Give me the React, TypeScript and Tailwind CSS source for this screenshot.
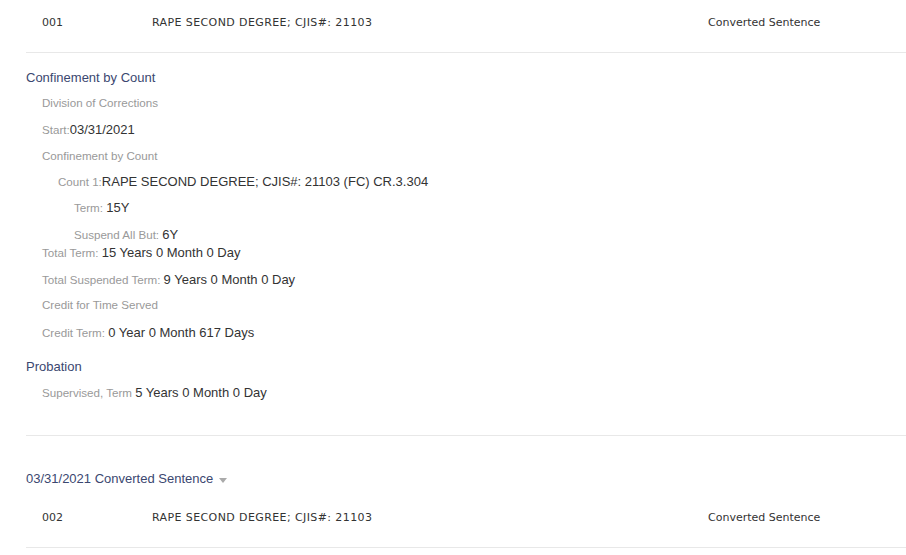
import React from 'react';

const HEAD = 'text-[13px] text-[#3b4770]';
const LABEL = 'text-[11.6px] text-[#999999]';
const VALUE = 'text-[13px] text-[#333333]';

const Line: React.FC<{ indent?: string; label: string; value?: string; h?: string }> = ({ indent = 'pl-4', label, value, h = 'h-[26px] leading-[26px]' }) => (
  <div className={`${indent} ${h} whitespace-nowrap`}>
    <span className={LABEL}>{label}</span>
    {value && <span className={VALUE}>{value}</span>}
  </div>
);

const ChargeRow: React.FC<{ no: string; h: string }> = ({ no, h }) => (
  <div className={`${h} flex items-center text-[11px] text-[#333333] font-['DejaVu_Sans',Verdana,sans-serif]`}>
    <span className="w-[126px] pl-4">{no}</span>
    <span className="w-[556px] tracking-[0.4px]">RAPE SECOND DEGREE; CJIS#: 21103</span>
    <span>Converted Sentence</span>
  </div>
);

export default function App() {
  return (
    <div className="w-[906px] h-[555px] overflow-hidden bg-white pl-[26px] font-['Liberation_Sans',Arial,sans-serif]">
      <ChargeRow no="001" h="h-[52px] pb-[6px]" />
      <div className="h-px bg-[#e8e8e8]" />

      <div className={`${HEAD} mt-[12px] h-[26px] leading-[26px]`}>Confinement by Count</div>
      <div className="-mt-[2px]">
        <Line label="Division of Corrections" />
        <Line label="Start:" value="03/31/2021" h="h-[27px] leading-[27px]" />
        <Line label="Confinement by Count" />
        <Line indent="pl-8" label="Count 1:" value="RAPE SECOND DEGREE; CJIS#: 21103 (FC) CR.3.304" />
        <Line indent="pl-12" label="Term: " value="15Y" />
        <Line indent="pl-12" label="Suspend All But: " value="6Y" h="h-[22px] leading-[27px]" />
        <Line label="Total Term: " value="15 Years 0 Month 0 Day" h="h-[24px] leading-[20px]" />
        <Line label="Total Suspended Term: " value="9 Years 0 Month 0 Day" />
        <Line label="Credit for Time Served" h="h-[26px] leading-[24px]" />
        <Line label="Credit Term: " value="0 Year 0 Month 617 Days" h="h-[27px] leading-[27px]" />
      </div>

      <div className={`${HEAD} mt-[9px] h-[26px] leading-[26px]`}>Probation</div>
      <div className="-mt-[1px]">
        <Line label="Supervised, Term " value="5 Years 0 Month 0 Day" />
      </div>

      <div className="mt-[30px] h-px bg-[#e8e8e8]" />

      <div className={`${HEAD} mt-[30px] h-[26px] leading-[26px] flex items-center gap-[6px]`}>
        <span>03/31/2021 Converted Sentence</span>
        <svg width="8" height="5" viewBox="0 0 8 5" className="mt-[2px]">
          <path d="M0 0 L8 0 L4 5 Z" fill="#aaaaaa" />
        </svg>
      </div>
      <ChargeRow no="002" h="h-[55px] pb-[3px]" />
      <div className="h-px bg-[#e8e8e8]" />
    </div>
  );
}
